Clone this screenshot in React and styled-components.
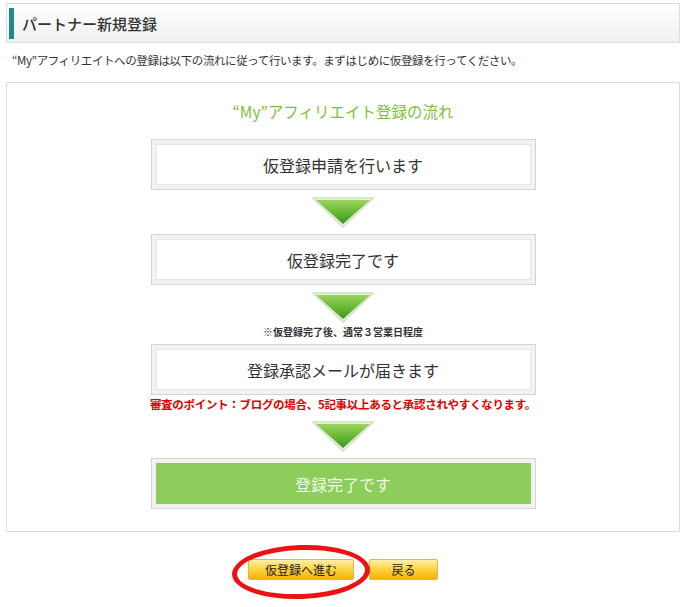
import styled, { createGlobalStyle } from "styled-components";

const GlobalStyle = createGlobalStyle`
  body {
    margin: 0;
    background: #fff;
    font-family: "Noto Sans CJK JP", "DejaVu Sans", sans-serif;
    color: #333;
  }
`;

const Page = styled.div`
  width: 674px;
  min-height: 604px;
  padding: 3px 12px 0 6px;
`;

const Header = styled.div`
  height: 38px;
  border: 1px solid #dcdcdc;
  background: linear-gradient(#ffffff, #f0f0f0);
  display: flex;
  align-items: center;
  padding: 0 2px;
`;

const HeaderBar = styled.div`
  width: 5px;
  height: 31px;
  background: #1f8a8c;
  margin-right: 8px;
`;

const HeaderTitle = styled.h1`
  margin: 0;
  font-size: 15px;
  font-weight: 500;
  color: #333;
`;

const Intro = styled.p`
  margin: 9px 0 0 6px;
  font-size: 11.5px;
  color: #333;
  letter-spacing: -0.4px;
`;

const Panel = styled.div`
  margin-top: 14px;
  height: 448px;
  border: 1px solid #dcdcdc;
  display: flex;
  flex-direction: column;
  align-items: center;
`;

const FlowTitle = styled.h2`
  margin: 17px 0 0;
  font-size: 15.5px;
  font-weight: 400;
  color: #7cbf3e;
  height: 22px;
  line-height: 22px;
`;

const Step = styled.div`
  width: 375px;
  height: 41px;
  border: 1px solid #d4d4d4;
  background: #f2f2f2;
  padding: 4px;
  margin-top: ${(p) => p.$mt || 0}px;
`;

const StepInner = styled.div`
  height: 100%;
  background: ${(p) => (p.$done ? "#8ccd5c" : "#fff")};
  border: 1px solid ${(p) => (p.$done ? "#8ccd5c" : "#e6e6e6")};
  box-sizing: border-box;
  display: flex;
  align-items: center;
  justify-content: center;
  font-size: 16px;
  color: ${(p) => (p.$done ? "#f1fae6" : "#333")};
`;

const ArrowWrap = styled.div`
  margin-top: ${(p) => p.$mt || 0}px;
  height: 32px;
  display: flex;
`;

const Note = styled.div`
  margin-top: ${(p) => p.$mt || 0}px;
  font-size: ${(p) => p.$size}px;
  font-weight: 700;
  color: ${(p) => p.$color};
  height: ${(p) => p.$h}px;
  line-height: ${(p) => p.$h}px;
  letter-spacing: ${(p) => p.$ls || 0}px;
`;

const ButtonRow = styled.div`
  position: relative;
  margin-top: 27px;
  display: flex;
  justify-content: center;
  gap: 15px;
`;

const Button = styled.button`
  width: ${(p) => p.$w}px;
  height: 21px;
  padding: 0;
  border: 1px solid #e3b54a;
  border-radius: 2px;
  background: linear-gradient(#fff0a8, #ffd64a 45%, #f3b300);
  font-family: inherit;
  font-size: 12px;
  color: #222;
  cursor: pointer;
`;

const Circle = styled.div`
  position: absolute;
  left: 226px;
  top: -14px;
  width: 128px;
  height: 44px;
  border: 5px solid #ee1111;
  border-radius: 50%;
  transform: rotate(-2deg);
  pointer-events: none;
`;

const Arrow = () => (
  <svg width="64" height="32" viewBox="0 0 64 32">
    <defs>
      <linearGradient id="ag" x1="0" y1="0" x2="0" y2="1">
        <stop offset="0" stopColor="#98d65a" />
        <stop offset="1" stopColor="#3c9a18" />
      </linearGradient>
    </defs>
    <path d="M2 2 H62 L32 31 Z" fill="#e9f2e0" stroke="#d9e6cf" strokeWidth="2" strokeLinejoin="round" />
    <path d="M5 4 H59 L32 28 Z" fill="url(#ag)" />
  </svg>
);

const App = () => (
  <Page>
    <GlobalStyle />
    <Header>
      <HeaderBar />
      <HeaderTitle>パートナー新規登録</HeaderTitle>
    </Header>
    <Intro>
      “My”アフィリエイトへの登録は以下の流れに従って行います。まずはじめに仮登録を行ってください。
    </Intro>
    <Panel>
      <FlowTitle>“My”アフィリエイト登録の流れ</FlowTitle>
      <Step $mt={17}>
        <StepInner>仮登録申請を行います</StepInner>
      </Step>
      <ArrowWrap $mt={6}>
        <Arrow />
      </ArrowWrap>
      <Step $mt={6}>
        <StepInner>仮登録完了です</StepInner>
      </Step>
      <ArrowWrap $mt={6}>
        <Arrow />
      </ArrowWrap>
      <Note $size={10} $color="#333" $h={14} $mt={2}>
        ※仮登録完了後、通常３営業日程度
      </Note>
      <Step $mt={5}>
        <StepInner>登録承認メールが届きます</StepInner>
      </Step>
      <Note $size={11.5} $color="#e00000" $h={16} $mt={1} $ls={-0.3}>
        審査のポイント：ブログの場合、5記事以上あると承認されやすくなります。
      </Note>
      <ArrowWrap $mt={8}>
        <Arrow />
      </ArrowWrap>
      <Step $mt={6}>
        <StepInner $done>登録完了です</StepInner>
      </Step>
    </Panel>
    <ButtonRow>
      <Button $w={106}>仮登録へ進む</Button>
      <Button $w={69}>戻る</Button>
      <Circle />
    </ButtonRow>
  </Page>
);

export default App;
